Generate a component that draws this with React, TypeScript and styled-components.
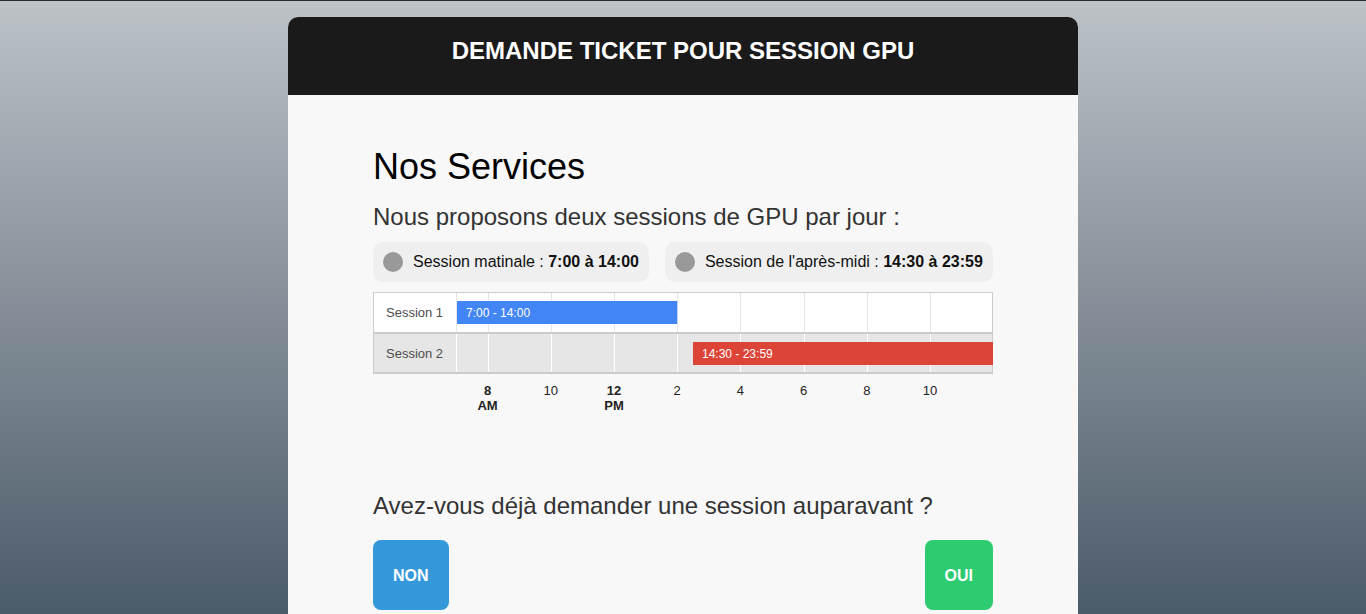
import React from "react";
import styled, { createGlobalStyle } from "styled-components";

const GlobalStyle = createGlobalStyle`
  html {
    margin: 0;
    padding: 0;
    overflow-y: scroll;
  }
  html::-webkit-scrollbar {
    width: 12px;
    background: #fafafa;
  }
  html::-webkit-scrollbar-track {
    background: #fafafa;
  }
  html::-webkit-scrollbar-thumb {
    background: #a8a8a8;
    border: 3px solid #fafafa;
    border-top-width: 0;
    border-radius: 6px;
  }
  body {
    margin: 0;
    padding: 0;
    border-top: 1px solid #2b2b2b;
    min-height: 786px;
    box-sizing: border-box;
    background: linear-gradient(to bottom, #bdc3c7, #2c3e50);
    font-family: "Liberation Sans", Arial, sans-serif;
  }
`;

const Card = styled.div`
  width: 790px;
  margin: 16px 0 0 calc(50vw - 395px);
  background: #f8f8f8;
  border-radius: 10px 10px 0 0;
  overflow: hidden;
`;

const Header = styled.header`
  height: 78px;
  box-sizing: border-box;
  padding-top: 20px;
  background: #1a1a1a;
  text-align: center;
`;

const Title = styled.h1`
  margin: 0;
  font-size: 24px;
  line-height: 28px;
  font-weight: bold;
  color: #ffffff;
`;

const Content = styled.main`
  padding: 51px 85px 170px;
  display: flex;
  flex-direction: column;
`;

const SectionTitle = styled.h2`
  margin: 0;
  font-size: 36px;
  line-height: 42px;
  font-weight: normal;
  color: #000;
`;

const Lead = styled.p<{ $top: number }>`
  margin: ${(p) => p.$top}px 0 0;
  font-size: 24px;
  line-height: 28px;
  color: #333;
`;

const PillRow = styled.div`
  display: flex;
  gap: 16px;
  margin-top: 11px;
`;

const Pill = styled.div`
  display: flex;
  align-items: center;
  gap: 10px;
  padding: 10px;
  background: #efefef;
  border-radius: 10px;
  font-size: 16px;
  line-height: 20px;
  color: #111;
`;

const Dot = styled.span`
  width: 20px;
  height: 20px;
  border-radius: 50%;
  background: #999;
  flex: none;
`;

const ChartBox = styled.div`
  margin-top: 10px;
  width: 620px;
  height: 130px;
`;

const ButtonRow = styled.div`
  display: flex;
  justify-content: space-between;
  margin-top: 20px;
`;

const ActionButton = styled.button<{ $bg: string }>`
  border: none;
  border-radius: 8px;
  padding: 26px 20px 24px;
  background: ${(p) => p.$bg};
  color: #fff;
  font-family: "Liberation Sans", Arial, sans-serif;
  font-size: 16px;
  line-height: 20px;
  font-weight: bold;
  cursor: pointer;
`;

const LABEL_W = 83;
const HOUR_W = 31.6;
const xOf = (h: number) => LABEL_W + (h - 7) * HOUR_W;

const ticks: { h: number; label: string; sub?: string }[] = [
  { h: 8, label: "8", sub: "AM" },
  { h: 10, label: "10" },
  { h: 12, label: "12", sub: "PM" },
  { h: 14, label: "2" },
  { h: 16, label: "4" },
  { h: 18, label: "6" },
  { h: 20, label: "8" },
  { h: 22, label: "10" },
];

const gridHours = [7, 8, 10, 12, 14, 16, 18, 20, 22];

const Timeline: React.FC = () => (
  <svg width="620" height="130" viewBox="0 0 620 130" fontFamily="'Liberation Sans', Arial, sans-serif">
    <rect x="0" y="0" width="620" height="41" fill="#ffffff" />
    <rect x="0" y="41" width="620" height="41" fill="#e6e6e6" />
    {gridHours.map((h) => {
      const x = Math.round(xOf(h)) + 0.5;
      return (
        <g key={h}>
          <line x1={x} y1="0" x2={x} y2="40" stroke="#e6e6e6" strokeWidth="1" />
          <line x1={x} y1="42" x2={x} y2="80" stroke="#ffffff" strokeWidth="1" />
        </g>
      );
    })}
    <line x1="0" y1="41" x2="620" y2="41" stroke="#cccccc" strokeWidth="2" />
    <line x1="0" y1="81" x2="620" y2="81" stroke="#cccccc" strokeWidth="2" />
    <rect x="0.5" y="0.5" width="619" height="81" fill="none" stroke="#cccccc" strokeWidth="1" />

    <text x="13" y="25" fontSize="13" fill="#4d4d4d">Session 1</text>
    <text x="13" y="66" fontSize="13" fill="#4d4d4d">Session 2</text>

    <rect x="84" y="9" width={xOf(14) - 84} height="23" fill="#4285f4" />
    <text x="93" y="25" fontSize="12" fill="#ffffff">7:00 - 14:00</text>

    <rect x={xOf(14.5)} y="50" width={620 - xOf(14.5)} height="23" fill="#db4437" />
    <text x={xOf(14.5) + 9} y="66" fontSize="12" fill="#ffffff">14:30 - 23:59</text>

    {ticks.map((t) => (
      <g key={t.h} textAnchor="middle" fontSize="13" fill="#222" fontWeight={t.sub ? "bold" : "normal"}>
        <text x={xOf(t.h)} y="103">{t.label}</text>
        {t.sub && <text x={xOf(t.h)} y="118">{t.sub}</text>}
      </g>
    ))}
  </svg>
);

export default function App() {
  return (
    <>
      <GlobalStyle />
      <Card>
        <Header>
          <Title>DEMANDE TICKET POUR SESSION GPU</Title>
        </Header>
        <Content>
          <SectionTitle>Nos Services</SectionTitle>
          <Lead $top={15}>Nous proposons deux sessions de GPU par jour :</Lead>
          <PillRow>
            <Pill>
              <Dot />
              <span>
                Session matinale : <b>7:00 à 14:00</b>
              </span>
            </Pill>
            <Pill>
              <Dot />
              <span>
                Session de l'après-midi : <b>14:30 à 23:59</b>
              </span>
            </Pill>
          </PillRow>
          <ChartBox>
            <Timeline />
          </ChartBox>
          <Lead $top={70}>Avez-vous déjà demander une session auparavant ?</Lead>
          <ButtonRow>
            <ActionButton $bg="#3498db">NON</ActionButton>
            <ActionButton $bg="#2ecc71">OUI</ActionButton>
          </ButtonRow>
        </Content>
      </Card>
    </>
  );
}
